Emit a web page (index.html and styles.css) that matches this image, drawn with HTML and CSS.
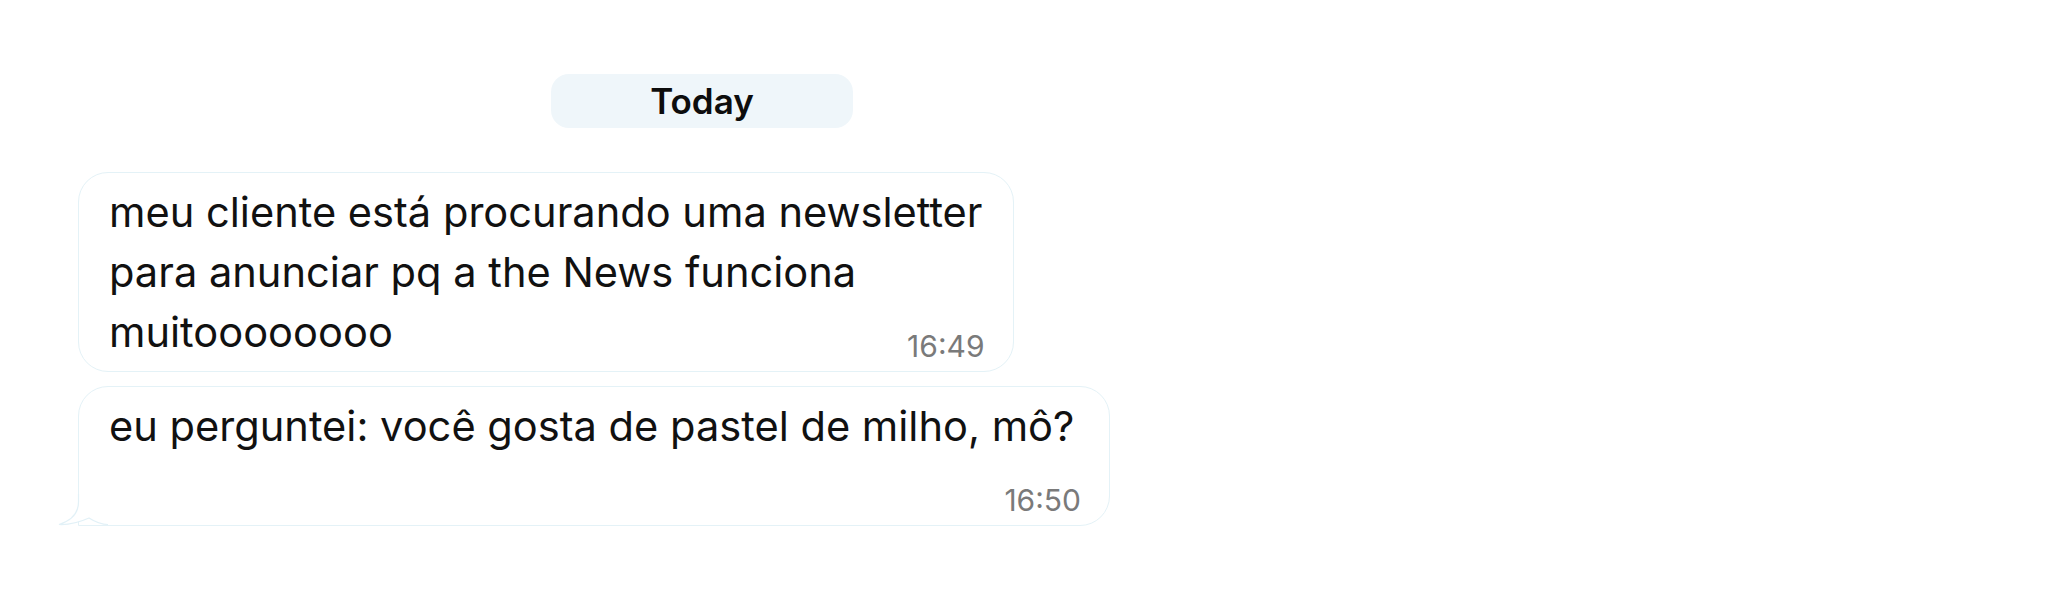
FILE: index.html
```html
<!DOCTYPE html>
<html lang="pt">
<head>
    <meta charset="utf-8"/>
    <meta content="width=device-width, initial-scale=1.0" name="viewport"/>
    <title>Chat</title>
    <link rel="stylesheet" href="styles.css">
</head>
<body>
    <div class="chat">
        <div class="day">Today</div>

        <div class="bubble">
            <p class="text">meu cliente está procurando uma newsletter<br>para anunciar pq a the News funciona<br>muitoooooooo<span class="spacer"></span></p>
            <span class="time">16:49</span>
        </div>

        <div class="bubble tail">
            <p class="text">eu perguntei: você gosta de pastel de milho, mô?<span class="spacer"></span></p>
            <span class="time">16:50</span>
            <svg class="tail-icon" width="50" height="32" viewBox="0 0 50 32">
                <path d="M20.5 0 L20.5 8 C20.5 20 12 27 1 30.5 C10 31 22 28 31 24 C38 28.5 44 30.5 50 30.5 L50 0 Z" fill="#ffffff"/>
                <path d="M20.5 0 L20.5 8 C20.5 20 12 27 1 30.5 C10 31 22 28 31 24 C38 28.5 44 30.5 50 30.5" fill="none" stroke="#e2f1f7" stroke-width="1.2"/>
            </svg>
        </div>
    </div>
</body>
</html>
```

FILE: styles.css
```css
body {
    font-family: Inter, "Noto Sans", sans-serif;
    background-color: #ffffff;
    color: #111111;
    margin: 0;
}

.chat {
    display: flex;
    flex-direction: column;
    align-items: flex-start;
    padding: 74px 0 0 78px;
}

.day {
    margin-left: 473px;
    width: 302px;
    height: 54px;
    display: flex;
    align-items: center;
    justify-content: center;
    background-color: #eff6fa;
    border-radius: 18px;
    font-size: 35px;
    font-weight: 600;
    color: #0d0d0d;
}

.bubble {
    position: relative;
    box-sizing: border-box;
    max-width: 1032px;
    margin-top: 14px;
    padding: 9px 30px 9px 30px;
    background-color: #ffffff;
    border: 1px solid #e4f2f7;
    border-radius: 30px;
}

.day + .bubble {
    margin-top: 44px;
}

.text {
    margin: 0;
    font-size: 41.6px;
    line-height: 60px;
}

.spacer {
    display: inline-block;
    width: 110px;
}

.time {
    position: absolute;
    right: 28px;
    bottom: 7px;
    font-size: 30px;
    line-height: 36px;
    color: #7a7a7a;
}

.tail {
    border-bottom-left-radius: 0;
}

.tail-icon {
    position: absolute;
    left: -21px;
    bottom: -1px;
}
```
